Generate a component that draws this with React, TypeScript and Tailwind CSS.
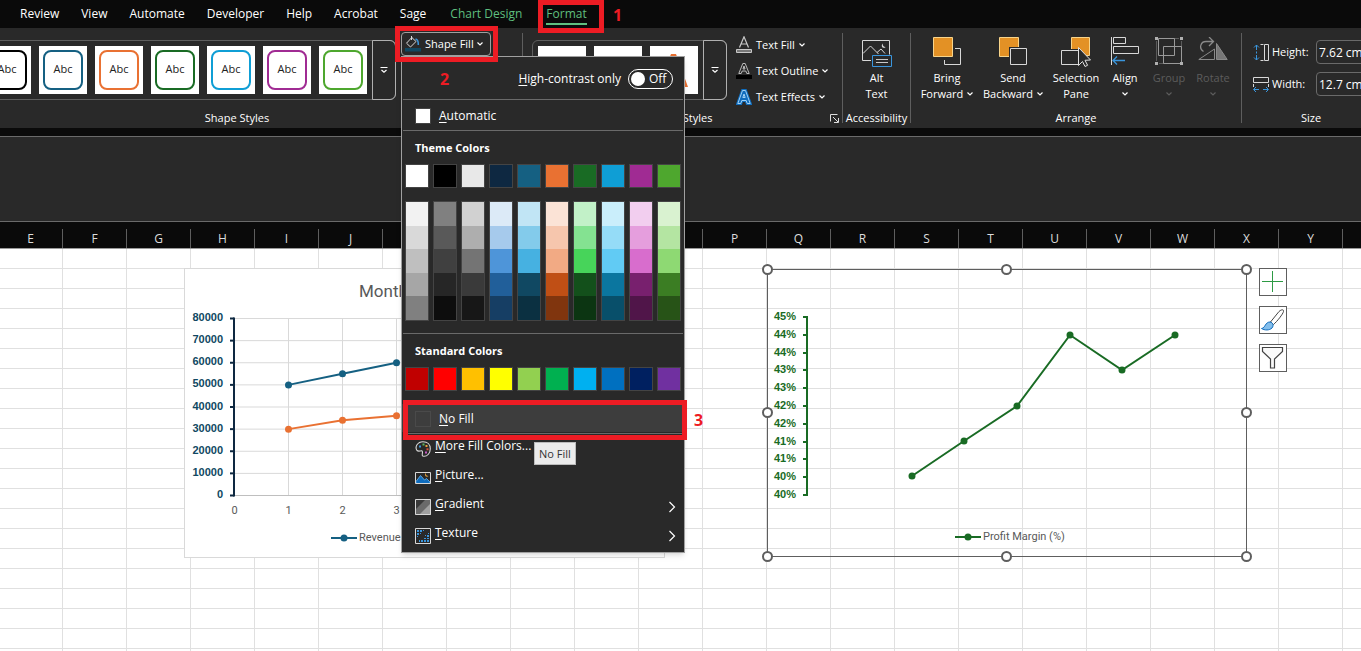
import type { ReactNode } from "react";
import clsx from "clsx";

const TABS = ["Review", "View", "Automate", "Developer", "Help", "Acrobat", "Sage"];
const CONTEXT_TABS = ["Chart Design", "Format"];

const SHAPE_STYLES = [
  "border-black",
  "border-[#156082]",
  "border-[#e97132]",
  "border-[#196b24]",
  "border-[#0f9ed5]",
  "border-[#a02b93]",
  "border-[#4ea72e]",
];

const THEME_COLORS = [
  "bg-white",
  "bg-black",
  "bg-[#e8e8e8]",
  "bg-[#0e2841]",
  "bg-[#156082]",
  "bg-[#e97132]",
  "bg-[#196b24]",
  "bg-[#0f9ed5]",
  "bg-[#a02b93]",
  "bg-[#4ea72e]",
];

const THEME_SHADES = [
  ["bg-[#f2f2f2]", "bg-[#d9d9d9]", "bg-[#bfbfbf]", "bg-[#a6a6a6]", "bg-[#808080]"],
  ["bg-[#808080]", "bg-[#595959]", "bg-[#404040]", "bg-[#262626]", "bg-[#0d0d0d]"],
  ["bg-[#d1d1d1]", "bg-[#aeaeae]", "bg-[#747474]", "bg-[#3a3a3a]", "bg-[#171717]"],
  ["bg-[#dceaf7]", "bg-[#a6caec]", "bg-[#4e95d9]", "bg-[#215f9a]", "bg-[#163e64]"],
  ["bg-[#c1e5f5]", "bg-[#83cbeb]", "bg-[#46b1e1]", "bg-[#104862]", "bg-[#0b3041]"],
  ["bg-[#fbe3d6]", "bg-[#f6c6ad]", "bg-[#f2aa84]", "bg-[#c04f15]", "bg-[#80350e]"],
  ["bg-[#c2f1c8]", "bg-[#84e291]", "bg-[#47d45a]", "bg-[#13501b]", "bg-[#0c3512]"],
  ["bg-[#caeefb]", "bg-[#95dcf7]", "bg-[#61cbf4]", "bg-[#0b769f]", "bg-[#084f6a]"],
  ["bg-[#f2ceef]", "bg-[#e59edd]", "bg-[#d86dcd]", "bg-[#78206e]", "bg-[#501549]"],
  ["bg-[#d9f2d0]", "bg-[#b4e5a2]", "bg-[#8ed973]", "bg-[#3b7d23]", "bg-[#275317]"],
];

const STANDARD_COLORS = [
  "bg-[#c00000]",
  "bg-[#ff0000]",
  "bg-[#ffc000]",
  "bg-[#ffff00]",
  "bg-[#92d050]",
  "bg-[#00b050]",
  "bg-[#00b0f0]",
  "bg-[#0070c0]",
  "bg-[#002060]",
  "bg-[#7030a0]",
];

const COLUMNS = "EFGHIJKLMNOPQRSTUVWXY".split("");

function Caret() {
  return (
    <svg className="shrink-0" width="6" height="6" viewBox="0 0 6 6" fill="none" stroke="currentColor" strokeWidth="1.200" aria-hidden="true">
      <path d="M.5 1.500 3 4 5.500 1.500" />
    </svg>
  );
}

function GalleryMore({ label }: { label: string }) {
  return (
    <button type="button" aria-label={label} className="flex w-6 shrink-0 items-center justify-center self-stretch rounded-r-md border border-[#b0b0b0] -my-px -mr-px">
      <svg width="8" height="8" viewBox="0 0 8 8" fill="none" stroke="#fff" strokeWidth="1.200">
        <path d="M.5 1.500h7M1.500 4 4 6.200 6.500 4" />
      </svg>
    </button>
  );
}

function Launcher() {
  return (
    <button type="button" aria-label="More options" className="flex w-4 items-center justify-center">
      <svg width="9" height="9" viewBox="0 0 9 9" fill="none" stroke="#ddd">
        <path d="M.5 7.500v-7h7M3 3l5 5M8.500 4v4.500H4" />
      </svg>
    </button>
  );
}

function Group({ label, launcher, className, children }: { label: string; launcher?: boolean; className: string; children: ReactNode }) {
  return (
    <section className={clsx("flex shrink-0 flex-col pb-0.5", className)}>
      <div className="flex flex-1 items-start">{children}</div>
      <div className="flex h-4">
        <span className="flex-1 whitespace-nowrap text-center leading-4">{label}</span>
        {launcher && <Launcher />}
      </div>
    </section>
  );
}

function Separator() {
  return <div className="my-[5px] w-px shrink-0 bg-[#5e5e5e]" />;
}

function BucketIcon() {
  return (
    <svg width="18" height="18" viewBox="0 0 18 18" fill="none" aria-hidden="true">
      <path d="M7.500 1v4M7.800 2.500 2.500 8.200 6.500 12 12 6.500Z" stroke="#d8d8d8" />
      <path d="M11.500 4c2 .5 3 2.500 2.800 6" stroke="#3a96dd" strokeWidth="1.600" />
      <path d="M1 13h16v3.500H1z" fill="#104862" />
    </svg>
  );
}

function TextFillIcon() {
  return (
    <svg width="16" height="18" viewBox="0 0 16 18" fill="none" stroke="#c8c8c8" aria-hidden="true">
      <path d="M3.500 11.500 8 .8l4.500 10.700M5 8h6" strokeWidth="1.200" />
      <path d="M.5 13.500h15v3H.5z" fill="#777" />
    </svg>
  );
}

function TextOutlineIcon() {
  return (
    <svg width="16" height="18" viewBox="0 0 16 18" fill="none" stroke="#c8c8c8" aria-hidden="true">
      <path d="M2.800 11.500 6.800 1.500h2.400l4 10h-2.400l-1-2.500H6.200l-1 2.500ZM7 7h2L8 4Z" strokeWidth=".9" />
      <path d="M0 13h16v4H0z" fill="#000" stroke="none" />
    </svg>
  );
}

function TextEffectsIcon() {
  return (
    <svg width="16" height="18" viewBox="0 0 16 18" fill="none" aria-hidden="true">
      <path d="M1.800 15.500 6.500 2.500h3l4.700 13h-3l-1-3H5.800l-1 3ZM6.800 9.500h2.400L8 6Z" stroke="#0f6cbd" strokeWidth="3" />
      <path d="M1.800 15.500 6.500 2.500h3l4.700 13h-3l-1-3H5.800l-1 3ZM6.800 9.500h2.400L8 6Z" stroke="#9fd0f5" strokeWidth="1" />
    </svg>
  );
}

function AltTextIcon() {
  return (
    <svg width="30" height="30" viewBox="0 0 30 30" fill="none" aria-hidden="true">
      <path d="M9 23.500H.5v-20h27v14" stroke="#d8d8d8" />
      <path d="M1 16.500 8.500 9l8 8M15 15.500l4-3.500 4 4.500" stroke="#d8d8d8" />
      <path d="M20.800 6.500c-.3 2 .8 3.400 2.800 3.500-1 1.500-3.600 1-3.800-1 0-1.200.4-2 1-2.500Z" fill="#d8d8d8" />
      <path d="M10.500 18.500h19v11h-19z" fill="#292929" stroke="#3a96dd" />
      <path d="M14 22.500h12M14 25.500h12" stroke="#c8c8c8" />
    </svg>
  );
}

function BringForwardIcon() {
  return (
    <svg width="30" height="30" viewBox="0 0 30 30" fill="none" aria-hidden="true">
      <path d="M12.500 11.500h16v16h-16z" stroke="#d8d8d8" />
      <path d="M0 0h23v23H0z" fill="#292929" />
      <path d="M1.500.5h19v19h-19z" fill="#e39125" stroke="#f8d48a" />
    </svg>
  );
}

function SendBackwardIcon() {
  return (
    <svg width="30" height="30" viewBox="0 0 30 30" fill="none" aria-hidden="true">
      <path d="M1.500.5h19v19h-19z" fill="#e39125" stroke="#f8d48a" />
      <path d="M11 10h18v18H11z" fill="#292929" />
      <path d="M12.500 11.500h16v16h-16z" stroke="#d8d8d8" />
    </svg>
  );
}

function SelectionPaneIcon() {
  return (
    <svg width="30" height="30" viewBox="0 0 30 30" fill="none" aria-hidden="true">
      <path d="M10.500.5h18v18h-18z" fill="#e39125" stroke="#f8d48a" />
      <path d="M0 12h18v17H0z" fill="#292929" />
      <path d="M.5 13.500h17v14H.5z" stroke="#d8d8d8" />
      <path d="m17.500 10.500 12 12.500-5.500.3 2.600 5-2.600 1.200-2.500-5-4 4Z" fill="#292929" stroke="#e0e0e0" />
    </svg>
  );
}

function AlignIcon() {
  return (
    <svg width="30" height="30" viewBox="0 0 30 30" fill="none" stroke="#d8d8d8" aria-hidden="true">
      <path d="M1.500 0v28M3.500.5h12v6h-12zM3.500 9.500h25v7h-25z" />
      <path d="M3 23.500h12M7 19.500l-4 4 4 4" stroke="#3a96dd" strokeWidth="1.300" />
    </svg>
  );
}

function ObjectGroupIcon() {
  return (
    <svg width="30" height="30" viewBox="0 0 30 30" fill="none" stroke="#9a9a9a" aria-hidden="true">
      <path d="M2.500 4v20M5 1.500h20M27.500 4v20M5 26.500h20" strokeOpacity=".45" />
      <path d="M4.500 1.500h16v17h-16zM9.500 9.500h18v17h-18z" />
      <path d="M1 0h3v3H1zM26 0h3v3h-3zM1 25h3v3H1zM26 25h3v3h-3z" fill="#b0b0b0" stroke="none" />
    </svg>
  );
}

function RotateIcon() {
  return (
    <svg width="30" height="30" viewBox="0 0 30 30" fill="none" stroke="#8a8a8a" aria-hidden="true">
      <path d="M.8 22.500 16.500 12v10.500Z" />
      <path d="M18.500 6.500v16h10.700Z" fill="#777" />
      <path d="M5.500 14.500C.5 11.500 2.500 4.500 8 4.500h7M11 0l4.500 4.500L11 9" strokeWidth="1.300" />
    </svg>
  );
}

function HeightIcon() {
  return (
    <svg width="17" height="17" viewBox="0 0 17 17" fill="none" aria-hidden="true">
      <path d="M3.500 1v5M3.500 7.500v2M3.500 11v5M1 3.500 3.500 1 6 3.500M1 13.500 3.500 16 6 13.500" stroke="#3a96dd" />
      <path d="M7.500.5h3M7.500 16.500h3M11.500.5h4v16h-4z" stroke="#d8d8d8" />
    </svg>
  );
}

function WidthIcon() {
  return (
    <svg width="17" height="17" viewBox="0 0 17 17" fill="none" aria-hidden="true">
      <path d="M.5 1.500h15v5H.5zM.5 8v3M15.500 8v3" stroke="#d8d8d8" />
      <path d="M1 13.500h5M10 13.500h5M3 11l-2.500 2.500L3 16M13 11l2.500 2.500L13 16" stroke="#3a96dd" />
    </svg>
  );
}

function PaletteIcon() {
  return (
    <svg width="16" height="16" viewBox="0 0 16 16" fill="none" aria-hidden="true">
      <path d="M2 9.500C-.5 6 2.500.7 8 .7c4.500 0 7.300 3 7.300 7 0 4.500-3 7.800-6.500 7.600-2.500-.3-1.300-2.500-1.300-4C7.500 8 4 11.500 2 9.500Z" stroke="#d8d8d8" strokeWidth="1.100" />
      <path d="M4 4.500h2v2H4z" fill="#3a96dd" />
      <path d="M7.500 2.500h2v2h-2z" fill="#5cb85c" />
      <path d="M10.500 4h2v2h-2z" fill="#e8a33d" />
      <path d="M11.500 7.300h2v2h-2z" fill="#e0503a" />
      <path d="M10 10.500h2v2h-2z" fill="#c45ac4" />
    </svg>
  );
}

function PictureIcon() {
  return (
    <svg width="16" height="16" viewBox="0 0 16 16" fill="none" aria-hidden="true">
      <path d="M1 11.500 5.500 5.500l4 4.500 2-1.500 3.500 3.500v1.500H1Z" fill="#0f6cbd" stroke="#6cb8f0" strokeWidth=".8" />
      <path d="M11 3c-.5 2 .5 3 2.500 3-1 1.300-3.500.8-3.500-1.200C10 4 10.500 3.300 11 3Z" fill="#e8a33d" />
      <path d="M.5 2.500h15v11H.5z" stroke="#d8d8d8" />
    </svg>
  );
}

function GradientIcon() {
  return (
    <svg width="16" height="16" viewBox="0 0 16 16" aria-hidden="true">
      <path d="M0 0h16v16H0z" fill="#3a3a3a" />
      <path d="M11 0h5v16H0v-5Z" fill="#6a6a6a" />
      <path d="M16 4v12H4Z" fill="#a0a0a0" />
      <path d="M.5.5h15v15H.5z" fill="none" stroke="#d8d8d8" />
    </svg>
  );
}

function TextureIcon() {
  return (
    <svg width="16" height="16" viewBox="0 0 16 16" aria-hidden="true">
      <path
        d="M2 2h2v2H2zM5 2h2v2H5zM8 2h1v1H8zM2 5h2v2H2zM5 5h1v1H5zM2 8h1v1H2zM13 5h1v1h-1zM10 7h1v1h-1zM12 7h2v2h-2zM9 10h2v1H9zM12 10h2v1h-2zM4 12h1v2H4zM6 12h2v2H6zM9 12h2v2H9zM12 12h2v2h-2z"
        fill="#3a96dd"
      />
      <path d="M.5.5h15v15H.5z" fill="none" stroke="#d8d8d8" />
    </svg>
  );
}

// First letter is the keyboard accelerator
function Accel({ text }: { text: string }) {
  return (
    <span className="whitespace-nowrap">
      <span className="underline underline-offset-2">{text[0]}</span>
      {text.slice(1)}
    </span>
  );
}

function Swatches({ colors }: { colors: string[] }) {
  return (
    <div className="flex gap-1 pl-[3px]">
      {colors.map((c) => (
        <button key={c} type="button" aria-label="Color" className={clsx("size-6 border border-[#444]", c)} />
      ))}
    </div>
  );
}

const MORE_ITEMS = [
  { label: "More Fill Colors...", icon: <PaletteIcon />, sub: false },
  { label: "Picture...", icon: <PictureIcon />, sub: false },
  { label: "Gradient", icon: <GradientIcon />, sub: true },
  { label: "Texture", icon: <TextureIcon />, sub: true },
];

function MenuLine() {
  return <hr className="mx-px border-[#6a6a6a]" />;
}

function ShapeFillMenu() {
  return (
    <div className="absolute left-0 top-full z-20 w-[284px] border border-[#a0a0a0] bg-[#292929] pb-0.5 text-xs text-white shadow-md">
      <label className="flex h-[42px] items-center justify-end gap-[7px] pr-[11px] pt-0.5">
        <Accel text="High-contrast only" />
        <input type="checkbox" role="switch" className="sr-only" />
        <span className="flex h-5 w-[45px] items-center gap-1 rounded-full border border-white pl-0.5">
          <span className="size-[14px] rounded-full bg-white" />
          Off
        </span>
      </label>
      <MenuLine />
      <button type="button" className="flex h-[30px] w-full items-center gap-2 pl-[13px] pt-0.5">
        <span className="size-4 border border-[#444] bg-white" />
        <Accel text="Automatic" />
      </button>
      <MenuLine />
      <h3 className="pl-[13px] text-[11px] font-bold leading-[33px]">Theme Colors</h3>
      <Swatches colors={THEME_COLORS} />
      <div className="mt-[13px] mb-3 flex gap-1 pl-[3px]">
        {THEME_SHADES.map((shades) => (
          <div key={shades[2]} className="flex h-[120px] w-6 flex-col border border-[#444]">
            {shades.map((c) => (
              <button key={c} type="button" aria-label="Color" className={clsx("flex-1", c)} />
            ))}
          </div>
        ))}
      </div>
      <MenuLine />
      <h3 className="pl-[13px] text-[11px] font-bold leading-[33px]">Standard Colors</h3>
      <Swatches colors={STANDARD_COLORS} />
      <button type="button" className="mt-[13px] flex h-7 w-full items-center gap-2 bg-[#3d3d3d] pl-[13px] pt-0.5">
        <span className="size-4 border border-[#4a4a4a]" />
        <Accel text="No Fill" />
      </button>
      <div className="h-px" />
      <MenuLine />
      {MORE_ITEMS.map((item) => (
        <button key={item.label} type="button" className="flex h-[29px] w-full items-center gap-1 pl-[13px] pr-2">
          {item.icon}
          <span className="flex-1 pb-[5px] text-left">
            <Accel text={item.label} />
          </span>
          {item.sub && (
            <svg width="8" height="12" viewBox="0 0 8 12" fill="none" stroke="#fff" strokeWidth="1.200">
              <path d="m1.500 1 5 5-5 5" />
            </svg>
          )}
        </button>
      ))}
      <div role="tooltip" className="absolute left-[132px] top-[385px] whitespace-nowrap border border-[#bbb] bg-[#ebebeb] px-1 text-[11px] leading-[21px] text-[#333]">
        No Fill
      </div>
    </div>
  );
}

function BigButton({ icon, lines, caret, disabled, className }: { icon: ReactNode; lines: string[]; caret?: boolean; disabled?: boolean; className: string }) {
  return (
    <button type="button" disabled={disabled} className={clsx("flex shrink-0 flex-col items-center pt-[9px] leading-4", disabled && "text-[#5c5c5c]", className)}>
      {icon}
      <span className="mt-[3px] whitespace-nowrap">{lines[0]}</span>
      <span className="flex h-4 items-center gap-1 whitespace-nowrap">
        {lines[1]}
        {caret && <Caret />}
      </span>
    </button>
  );
}

function SmallButton({ icon, label }: { icon: ReactNode; label: string }) {
  return (
    <button type="button" className="flex h-[26px] items-center gap-1 whitespace-nowrap">
      {icon}
      {label}
      <Caret />
    </button>
  );
}

function SizeField({ id, label, value, icon }: { id: string; label: string; value: string; icon: ReactNode }) {
  return (
    <div className="flex h-6 items-center">
      <span className="w-[19px]">{icon}</span>
      <label htmlFor={id} className="w-11">
        {label}
      </label>
      <input id={id} defaultValue={value} className="h-6 w-16 rounded border border-[#6a6a6a] bg-transparent px-0.5 text-xs text-white" />
    </div>
  );
}

function Ribbon() {
  return (
    <div className="-ml-8 flex h-[100px] shrink-0 bg-[#292929] text-[11px] text-white">
      <Group label="Shape Styles" launcher className="w-[554px]">
        <div className="ml-[5px] mt-3 flex h-[60px] w-[423px] items-center justify-end rounded-md border border-[#5e5e5e]">
          <div className="flex gap-2 pr-[5px]">
            {SHAPE_STYLES.map((border) => (
              <button key={border} type="button" className="size-12 bg-white p-1">
                <span className={clsx("flex size-10 items-center justify-center rounded-lg border-2 pb-0.5 text-[#222]", border)}>Abc</span>
              </button>
            ))}
          </div>
          <GalleryMore label="More shape styles" />
        </div>
        <div className="relative ml-[5px] mt-1">
          <button type="button" className="flex h-6 w-[90px] items-center gap-[3px] whitespace-nowrap rounded border border-[#a0a0a0] pl-0.5">
            <BucketIcon />
            Shape Fill
            <Caret />
          </button>
          <ShapeFillMenu />
        </div>
      </Group>
      <Separator />
      <Group label="WordArt Styles" launcher className="w-[319px]">
        <div className="ml-[9px] mt-3 flex h-[60px] w-[195px] items-center justify-between rounded-md border border-[#5e5e5e] pl-[5px]">
          <div className="flex gap-2">
            <button type="button" aria-label="Fill black" className="size-12 bg-white" />
            <button type="button" aria-label="Fill blue" className="size-12 bg-white" />
            <button type="button" aria-label="Fill orange" className="size-12 bg-white">
              <svg width="48" height="48" viewBox="0 0 48 48">
                <path d="M8 41 21 8h5l12 33h-7l-3-9H18l-3 9Z" fill="#e97132" />
              </svg>
            </button>
          </div>
          <GalleryMore label="More WordArt styles" />
        </div>
        <div className="ml-[9px] mt-1">
          <SmallButton icon={<TextFillIcon />} label="Text Fill" />
          <SmallButton icon={<TextOutlineIcon />} label="Text Outline" />
          <SmallButton icon={<TextEffectsIcon />} label="Text Effects" />
        </div>
      </Group>
      <Separator />
      <Group label="Accessibility" className="w-[67px]">
        <BigButton icon={<AltTextIcon />} lines={["Alt", "Text"]} className="w-full" />
      </Group>
      <Separator />
      <Group label="Arrange" className="w-[330px]">
        <div className="flex pl-1">
          <BigButton icon={<BringForwardIcon />} lines={["Bring", "Forward"]} caret className="w-16" />
          <BigButton icon={<SendBackwardIcon />} lines={["Send", "Backward"]} caret className="w-[68px]" />
          <BigButton icon={<SelectionPaneIcon />} lines={["Selection", "Pane"]} className="w-[58px]" />
          <BigButton icon={<AlignIcon />} lines={["Align", ""]} caret className="w-10" />
          <BigButton icon={<ObjectGroupIcon />} lines={["Group", ""]} caret disabled className="w-12" />
          <BigButton icon={<RotateIcon />} lines={["Rotate", ""]} caret disabled className="w-10" />
        </div>
      </Group>
      <Separator />
      <Group label="Size" className="w-[138px]">
        <div className="ml-[11px] mt-3 flex flex-col gap-2">
          <SizeField id="shape-height" label="Height:" value="7.62 cm" icon={<HeightIcon />} />
          <SizeField id="shape-width" label="Width:" value="12.7 cm" icon={<WidthIcon />} />
        </div>
      </Group>
    </div>
  );
}

const REVENUE = [50000, 55000, 60000];
const COSTS = [30000, 34000, 36000];

const chartX = (i: number) => 104.5 + i * 54;
const chartY = (v: number) => 226.5 - (v / 80000) * 177;

function Series({ values, color }: { values: number[]; color: string }) {
  return (
    <g fill={color} stroke={color}>
      <polyline points={values.map((v, i) => `${chartX(i)},${chartY(v)}`).join(" ")} fill="none" strokeWidth="2" />
      {values.map((v, i) => (
        <circle key={i} cx={chartX(i)} cy={chartY(v)} r="3.500" stroke="none" />
      ))}
    </g>
  );
}

function MonthlyChart() {
  const ticks = [0, 1, 2, 3, 4, 5, 6, 7, 8];
  return (
    <div className="absolute left-[184px] top-[19px] border border-[#d9d9d9] bg-white">
      <svg className="-ml-px block font-[Roboto]" width="480" height="288" viewBox="0 0 480 288" fontSize="11">
        <text x="175" y="28" fontSize="17" fill="#595959">
          Monthly
        </text>
        {ticks.map((t) => (
          <g key={t}>
            <path d={`M50 ${chartY(t * 10000)}H440`} stroke={t === 0 ? "#bfbfbf" : "#d9d9d9"} />
            <path d={`M46 ${chartY(t * 10000)}h4`} stroke="#0e2841" strokeWidth="2" />
            <text x="39" y={chartY(t * 10000) + 2.5} textAnchor="end" fontFamily="Liberation Sans" fontWeight="700" fill="#104862">
              {t * 10000}
            </text>
          </g>
        ))}
        {[1, 2, 3, 4, 5, 6].map((m) => (
          <path key={m} d={`M${chartX(m - 1)} 49v177`} stroke="#d9d9d9" />
        ))}
        <path d="M50 48.500v179" stroke="#0e2841" strokeWidth="2" />
        {[0, 1, 2, 3].map((m) => (
          <text key={m} x={chartX(m - 1)} y="245" textAnchor="middle" fill="#595959">
            {m}
          </text>
        ))}
        <Series values={REVENUE} color="#156082" />
        <Series values={COSTS} color="#e97132" />
        <path d="M147 269h26" stroke="#156082" strokeWidth="2" />
        <circle cx="160" cy="269" r="3.500" fill="#156082" />
        <text x="175" y="272" fill="#595959">
          Revenue
        </text>
      </svg>
    </div>
  );
}

const MARGIN_LABELS = ["45%", "44%", "44%", "43%", "43%", "42%", "42%", "41%", "41%", "40%", "40%"];
const MARGIN_POINTS = [
  [150, 212],
  [202, 177],
  [255, 142],
  [308, 71],
  [360, 106],
  [413, 71],
];
const HANDLES = [
  [5, 5],
  [244, 5],
  [484, 5],
  [5, 148],
  [484, 148],
  [5, 292],
  [244, 292],
  [484, 292],
];

function MarginChart() {
  return (
    <div className="absolute left-[762px] top-[15px]">
      <svg className="block font-[Roboto]" width="491" height="299" viewBox="0 0 491 299" fontSize="11">
        <path d="M5.500 5.500h479v287h-479z" fill="none" stroke="#5e5e5e" />
        <g stroke="#196b24" strokeWidth="2" fill="none">
          <path d="M45 52v180" />
          {MARGIN_LABELS.map((_, i) => (
            <path key={i} d={`M41 ${Math.round(53 + i * 17.8)}h4`} />
          ))}
          <polyline points={MARGIN_POINTS.map((p) => p.join(",")).join(" ")} />
          <path d="M193 273h26" />
        </g>
        <g fill="#196b24">
          {MARGIN_LABELS.map((label, i) => (
            <text key={i} x="34" y={Math.round(56 + i * 17.8)} textAnchor="end" fontFamily="Liberation Sans" fontWeight="700">
              {label}
            </text>
          ))}
          {MARGIN_POINTS.map(([x, y]) => (
            <circle key={x} cx={x} cy={y} r="3.500" />
          ))}
          <circle cx="206" cy="273" r="3.500" />
        </g>
        <text x="221" y="276" fill="#595959">
          Profit Margin (%)
        </text>
        {HANDLES.map(([x, y]) => (
          <circle key={`${x}-${y}`} cx={x + 0.5} cy={y + 0.5} r="4.500" fill="#fff" stroke="#5e5e5e" strokeWidth="2" />
        ))}
      </svg>
      <div className="absolute left-[497px] top-1 flex flex-col gap-[10px]">
        <ChartButton label="Chart elements">
          <path d="M13.500 3v21M3 13.500h21" stroke="#2d9a44" />
        </ChartButton>
        <ChartButton label="Chart styles">
          <path d="M11.500 16 20 5.500C22 3.500 25 3 24.500 5.500 24 8 18 15.500 14.500 18.500Z" stroke="#444" fill="#fff" />
          <path d="M2.500 22.500c4-.5 3.500-6.500 8.500-6.500 3 .5 4 3.500 2 6-2.500 2.500-7.500 2.500-10.500.5Z" fill="#83beec" stroke="#0f6cbd" />
        </ChartButton>
        <ChartButton label="Chart filters">
          <path d="M3.500 3.500h20v4l-8 7.500v9h-4v-9l-8-7.500Z" stroke="#444" strokeWidth="1.200" fill="#fafafa" />
        </ChartButton>
      </div>
    </div>
  );
}

function ChartButton({ label, children }: { label: string; children: ReactNode }) {
  return (
    <button type="button" aria-label={label} className="size-7 border border-[#5e5e5e] bg-white">
      <svg width="26" height="26" viewBox="1 1 26 26" fill="none">
        {children}
      </svg>
    </button>
  );
}

export default function App() {
  return (
    <div className="relative flex min-h-screen flex-col overflow-hidden bg-white font-['Open_Sans',sans-serif]">
      <nav className="flex h-7 shrink-0 gap-6 whitespace-nowrap bg-[#0a0a0a] pl-5 text-xs leading-7 text-white">
        <div className="flex gap-[22px]">
          {TABS.map((tab) => (
            <a key={tab} href="#">
              {tab}
            </a>
          ))}
        </div>
        <div className="flex gap-6 text-[#5fbf7f]">
          {CONTEXT_TABS.map((tab) => (
            <a key={tab} href="#" className={clsx("h-[25px]", tab === "Format" && "border-b-2 border-[#5fbf7f]")}>
              {tab}
            </a>
          ))}
        </div>
      </nav>
      <Ribbon />
      <div className="h-2 shrink-0 bg-[#0a0a0a]" />
      <div className="h-[86px] shrink-0 border-y border-[#6a6a6a] bg-[#292929]" />
      <div className="flex h-[27px] shrink-0 overflow-hidden border-b border-[#9a9a9a] bg-[#0a0a0a] pt-[7px] text-xs text-[#ddd]">
        <div className="-ml-px flex">
          {COLUMNS.map((c) => (
            <div key={c} className="w-16 shrink-0 border-r border-[#5e5e5e] text-center leading-5">
              {c}
            </div>
          ))}
        </div>
      </div>
      <main className="relative flex-1 bg-[linear-gradient(to_left,#e0e0e0_1px,transparent_1px),linear-gradient(to_top,#e0e0e0_1px,transparent_1px)] bg-[length:64px_20px] bg-[position:-1px_0]">
        <MonthlyChart />
        <MarginChart />
      </main>

      <div className="pointer-events-none absolute inset-0 z-30 text-base font-bold leading-5 text-[#ed1c24]">
        <div className="absolute left-[538px] top-0 h-[33px] w-[66px] border-[5px] border-[#ed1c24]" />
        <span className="absolute left-[613px] top-[5px]">1</span>
        <div className="absolute left-[395px] top-[26px] h-9 w-[103px] border-[5px] border-[#ed1c24]" />
        <span className="absolute left-[440px] top-[69px]">2</span>
        <div className="absolute left-[403px] top-[400px] h-10 w-[284px] border-[5px] border-[#ed1c24]" />
        <span className="absolute left-[694px] top-[410px]">3</span>
      </div>
    </div>
  );
}
